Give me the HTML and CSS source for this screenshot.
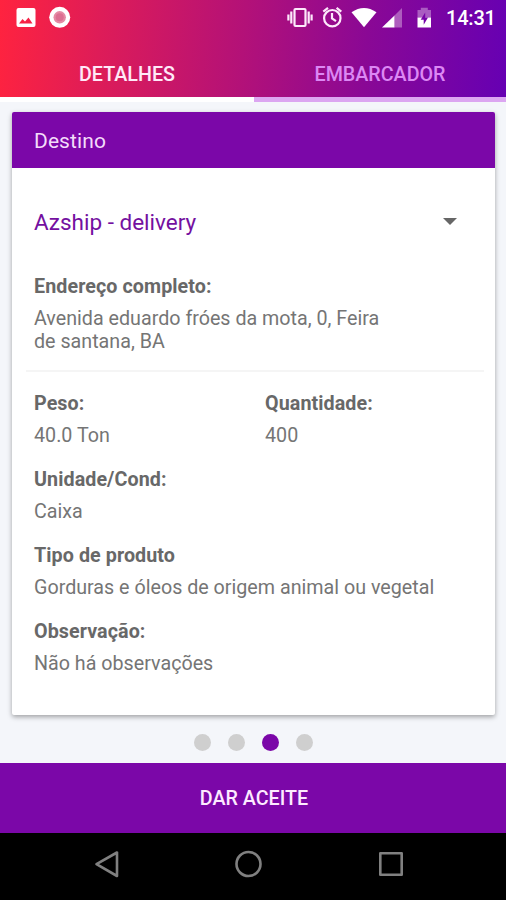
FILE: index.html
```html
<!DOCTYPE html>
<html lang="pt-BR">
<head>
<meta charset="utf-8">
<title>Detalhes</title>
<link rel="stylesheet" href="styles.css">
</head>
<body>
<header class="top">
  <div class="status">
    <svg width="72" height="36" viewBox="0 0 72 36">
      <path fill="#fff" fill-rule="evenodd" d="M18.500 8h15a2 2 0 0 1 2 2v15a2 2 0 0 1-2 2h-15a2 2 0 0 1-2-2v-15a2 2 0 0 1 2-2zM19 23.500h13.500l-4-6-3.500 4-2.500-2.500z"/>
      <circle cx="59.700" cy="17.300" r="10.500" fill="#fff"/>
      <circle cx="59.700" cy="17.300" r="6.200" fill="#e58aa4"/>
      <circle cx="59.700" cy="17.300" r="4" fill="#dc6f92"/>
    </svg>
    <svg class="status-right" width="150" height="36" viewBox="284 0 150 36">
      <g fill="none" stroke="#fde9fb" stroke-width="2.200">
        <rect x="294.500" y="9" width="11" height="17" rx="1"/>
        <path d="M291.300 11.500v12M308.700 11.500v12M288.400 14.500v6M311.600 14.500v6"/>
        <circle cx="332.300" cy="18.200" r="8.200"/>
        <path d="M332 13v5.500l4 2.700M323.300 11.700l4.700-3.800M341.300 11.700l-4.700-3.800"/>
      </g>
      <path fill="#fff" d="M351.500 12.200q12.500-8.500 25 0L364 27.200z"/>
      <path fill="#fff" fill-opacity=".35" d="M402 8v19.500h-7.500v-12z"/>
      <path fill="#fff" d="M394.500 15.500v12h-12.500z"/>
      <path fill="#fff" fill-opacity=".35" d="M417.500 10h3.300v-2.200h7v2.200h3.200v7.500h-13.500z"/>
      <path fill="#fff" d="M417.500 17.500h13.500v10h-13.500z"/>
      <path fill="#7704a8" d="M425.200 12.500l-4.500 7.200h3v5l4.300-7.200h-2.800z"/>
    </svg>
    <span class="clock">14:31</span>
  </div>
  <nav class="tabs">
    <div class="tab tab-active">DETALHES</div>
    <div class="tab">EMBARCADOR</div>
  </nav>
</header>
<main class="page">
  <section class="card">
    <h1 class="card-title">Destino</h1>
    <div class="select">
      <span>Azship - delivery</span>
      <svg width="14" height="7" viewBox="0 0 14 7"><path fill="#666" d="M0 0h14l-7 7z"/></svg>
    </div>
    <div class="address">
      <div class="label">Endereço completo:</div>
      <div class="value">Avenida eduardo fróes da mota, 0, Feira<br>de santana, BA</div>
    </div>
    <div class="grid">
      <div><div class="label">Peso:</div><div class="value">40.0 Ton</div></div>
      <div><div class="label">Quantidade:</div><div class="value">400</div></div>
      <div class="wide"><div class="label">Unidade/Cond:</div><div class="value">Caixa</div></div>
      <div class="wide"><div class="label">Tipo de produto</div><div class="value">Gorduras e óleos de origem animal ou vegetal</div></div>
      <div class="wide"><div class="label">Observação:</div><div class="value">Não há observações</div></div>
    </div>
  </section>
  <div class="dots"><i></i><i></i><i class="on"></i><i></i></div>
</main>
<div class="accept">DAR ACEITE</div>
<footer class="navbar">
  <svg width="506" height="67" viewBox="0 833 506 67" fill="none" stroke="#808080" stroke-width="2.600" stroke-linejoin="round">
    <path d="M117 852.500v23.500l-20.500-11.800z"/>
    <circle cx="248.500" cy="864" r="12"/>
    <rect x="380.300" y="853.300" width="21.400" height="21.400"/>
  </svg>
</footer>
</body>
</html>
```
FILE: styles.css
```css
* { box-sizing: border-box; }
body {
  margin: 0;
  width: 506px;
  height: 900px;
  overflow: hidden;
  display: flex;
  flex-direction: column;
  background: #f4f6fa;
  font-family: Roboto, "Liberation Sans", sans-serif;
}
svg { display: block; flex: none; }
.top {
  height: 102px;
  display: flex;
  flex-direction: column;
  background: linear-gradient(95deg, #ff233f 0%, #de1c58 20%, #b31178 48%, #8a0895 72%, #6600b3 100%);
}
.status { height: 36px; display: flex; }
.status-right { margin-left: 212px; }
.clock {
  margin-left: 12px;
  font-size: 20px;
  font-weight: 500;
  line-height: 36px;
  letter-spacing: -.2px;
  color: #fff;
}
.tabs { flex: 1; display: grid; grid-template-columns: 254px 252px; }
.tab {
  display: flex;
  justify-content: center;
  border-bottom: 5px solid #dca6f1;
  font-size: 19.700px;
  font-weight: 500;
  line-height: 23px;
  padding-top: 27px;
  color: #dc88f4;
}
.tab-active { border-color: #fff; color: #ffe9f8; }
.page { height: 661px; padding: 10px 11px 0 12px; }
.card {
  height: 603px;
  background: #fff;
  border-radius: 2px;
  box-shadow: 0 2px 5px rgba(0, 0, 0, .35);
  overflow: hidden;
}
.card-title {
  margin: 0;
  height: 56px;
  padding-left: 22px;
  background: #7b07a8;
  color: #f3dcfa;
  font-size: 21px;
  font-weight: 400;
  letter-spacing: .1px;
  line-height: 58px;
}
.select {
  height: 107px;
  padding: 0 38px 0 22px;
  display: flex;
  align-items: center;
  justify-content: space-between;
  color: #7410a0;
  font-size: 22.500px;
  line-height: 26px;
}
.address {
  margin: 0 11px 0 14px;
  height: 97px;
  padding-left: 8px;
  border-bottom: 2px solid #f5f5f5;
}
.label { font-size: 19.700px; line-height: 23px; font-weight: 700; letter-spacing: .08px; color: #686868; }
.value { margin-top: 9px; font-size: 19.700px; line-height: 23px; color: #757575; white-space: nowrap; }
.grid {
  padding: 20px 0 0 22px;
  display: grid;
  grid-template-columns: 231px 1fr;
  row-gap: 21px;
}
.wide { grid-column: 1 / -1; }
.dots { display: flex; justify-content: center; gap: 17px; padding-top: 19px; }
.dots i { width: 17px; height: 17px; border-radius: 50%; background: #cfcfcf; }
.dots .on { background: #7b07a8; }
.accept {
  height: 70px;
  padding-left: 2px;
  background: #7b07a8;
  color: #fdeaff;
  text-align: center;
  font-size: 19.700px;
  font-weight: 500;
  line-height: 71px;
}
.navbar { height: 67px; background: #000; }
```
